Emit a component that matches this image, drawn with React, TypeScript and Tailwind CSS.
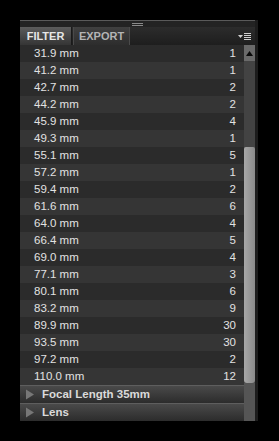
const rows: [string, string][] = [
  ['31.9 mm', '1'],
  ['41.2 mm', '1'],
  ['42.7 mm', '2'],
  ['44.2 mm', '2'],
  ['45.9 mm', '4'],
  ['49.3 mm', '1'],
  ['55.1 mm', '5'],
  ['57.2 mm', '1'],
  ['59.4 mm', '2'],
  ['61.6 mm', '6'],
  ['64.0 mm', '4'],
  ['66.4 mm', '5'],
  ['69.0 mm', '4'],
  ['77.1 mm', '3'],
  ['80.1 mm', '6'],
  ['83.2 mm', '9'],
  ['89.9 mm', '30'],
  ['93.5 mm', '30'],
  ['97.2 mm', '2'],
  ['110.0 mm', '12'],
];

function SectionHeader({ label }: { label: string }) {
  return (
    <div className="flex h-[18px] items-center border-t border-[#5e5e5e] bg-gradient-to-b from-[#4a4a4a] to-[#2c2c2c]">
      <svg width="10" height="11" viewBox="0 0 10 11" className="ml-[5px]">
        <path d="M1 0.5 L9 5.5 L1 10.5 Z" fill="#777777" />
      </svg>
      <span className="ml-[7px] text-[11.5px] font-bold text-[#dadada]">{label}</span>
    </div>
  );
}

export default function App() {
  return (
    <div className="h-[441px] w-[279px] bg-black pl-[20px] pt-[20px] font-['Liberation_Sans',sans-serif]">
      <div className="flex h-[401px] w-[238px]">
        <div className="flex w-[235px] flex-col">
          {/* grip bar */}
          <div className="flex h-[7px] items-center justify-center border-t border-[#5a5a5a] bg-[#232323]">
            <div className="flex flex-col gap-[1px]">
              <div className="h-px w-[11px] bg-[#8a8a8a]" />
              <div className="h-px w-[11px] bg-[#8a8a8a]" />
            </div>
          </div>
          {/* tabs */}
          <div className="flex h-[18px] items-stretch bg-gradient-to-b from-[#2c2c2c] to-[#1e1e1e]">
            <div className="flex w-[52px] items-center justify-center border-r border-[#1a1a1a] bg-gradient-to-b from-[#5c5c5c] to-[#353535] text-[11px] font-bold text-[#e6e6e6]">
              FILTER
            </div>
            <div className="ml-px flex w-[57px] items-center justify-center border-x border-[#4a4a4a] bg-gradient-to-b from-[#404040] to-[#2d2d2d] text-[11px] font-bold text-[#b4b4b4]">
              EXPORT
            </div>
            <div className="flex-1" />
            <div className="mr-[4px] flex items-center gap-[1px]">
              <svg width="5" height="3" viewBox="0 0 5 3">
                <path d="M0 0 L5 0 L2.5 3 Z" fill="#d0d0d0" />
              </svg>
              <div className="flex flex-col gap-[1px]">
                <div className="h-px w-[7px] bg-[#d0d0d0]" />
                <div className="h-px w-[7px] bg-[#d0d0d0]" />
                <div className="h-px w-[7px] bg-[#d0d0d0]" />
                <div className="h-px w-[7px] bg-[#d0d0d0]" />
              </div>
            </div>
          </div>
          {/* body */}
          <div className="flex flex-1">
            <div className="flex w-[224px] flex-col">
              {rows.map(([mm, count], i) => (
                <div
                  key={mm}
                  className={`flex h-[17px] items-center justify-between pl-[14px] pr-[8px] text-[11.5px] text-[#e2e2e2] ${
                    i % 2 === 0 ? 'bg-[#2b2b2b]' : 'bg-[#353535]'
                  }`}
                >
                  <span>{mm}</span>
                  <span>{count}</span>
                </div>
              ))}
              <SectionHeader label="Focal Length 35mm" />
              <SectionHeader label="Lens" />
            </div>
            {/* scrollbar */}
            <div className="flex w-[11px] flex-col bg-[#4a4a4a]">
              <div className="flex h-[16px] items-center justify-center bg-[#6a6a6a]">
                <svg width="7" height="5" viewBox="0 0 7 5">
                  <path d="M0 5 L3.5 0 L7 5 Z" fill="#0a0a0a" />
                </svg>
              </div>
              <div className="h-[86px] bg-[#434343]" />
              <div className="h-[236px] rounded-b-[3px] rounded-t-[2px] bg-gradient-to-r from-[#a8a8a8] to-[#8a8a8a]" />
              <div className="flex-1 bg-[#555555]" />
            </div>
          </div>
        </div>
        <div className="w-[3px] bg-[#1c1c1c]" />
      </div>
    </div>
  );
}
